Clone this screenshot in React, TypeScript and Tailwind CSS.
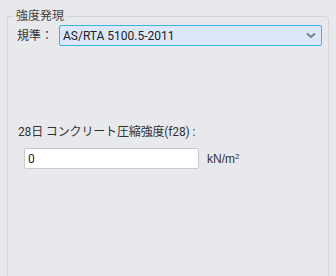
export default function App() {
  return (
    <div
      className="w-[336px] h-[276px] overflow-hidden bg-[#e8e9ed] text-[#333] text-[12px]"
      style={{ fontFamily: 'Roboto, "Noto Sans CJK JP", sans-serif' }}
    >
      <fieldset className="ml-[7px] mr-[7px] mt-[9px] h-[300px] border border-[#d4d5da] rounded-tr-[4px] px-[6px] pt-[2px]">
        <legend className="px-[2px] text-[#444] leading-[14px]">強度発現</legend>
        <div className="flex items-center pl-[3px]">
          <span className="w-[42px] leading-[14px]">規準：</span>
          <div className="flex-1 h-[21px] flex items-center justify-between rounded-[2px] border border-[#3cb4e8] bg-[#dce8fa] pl-[3px] pr-[5px]">
            <span className="text-[#222]">AS/RTA 5100.5-2011</span>
            <svg width="10" height="7" viewBox="0 0 10 7">
              <path d="M1 1.5 L5 5 L9 1.5" fill="none" stroke="#7b7f86" strokeWidth="2" />
            </svg>
          </div>
        </div>
        <div className="mt-[79px] pl-[4px] leading-[14px] tracking-[-0.15px]">28日 コンクリート圧縮強度(f28) :</div>
        <div className="flex items-center mt-[9px] pl-[10px]">
          <div className="w-[175px] h-[21px] flex items-center rounded-[2px] border border-[#c8cacf] bg-white pl-[3px] text-[#222]">
            0
          </div>
          <span className="ml-[8px]" style={{ fontFamily: '"Liberation Sans", sans-serif' }}>
            kN/m<sup className="text-[8px]">2</sup>
          </span>
        </div>
      </fieldset>
    </div>
  );
}
